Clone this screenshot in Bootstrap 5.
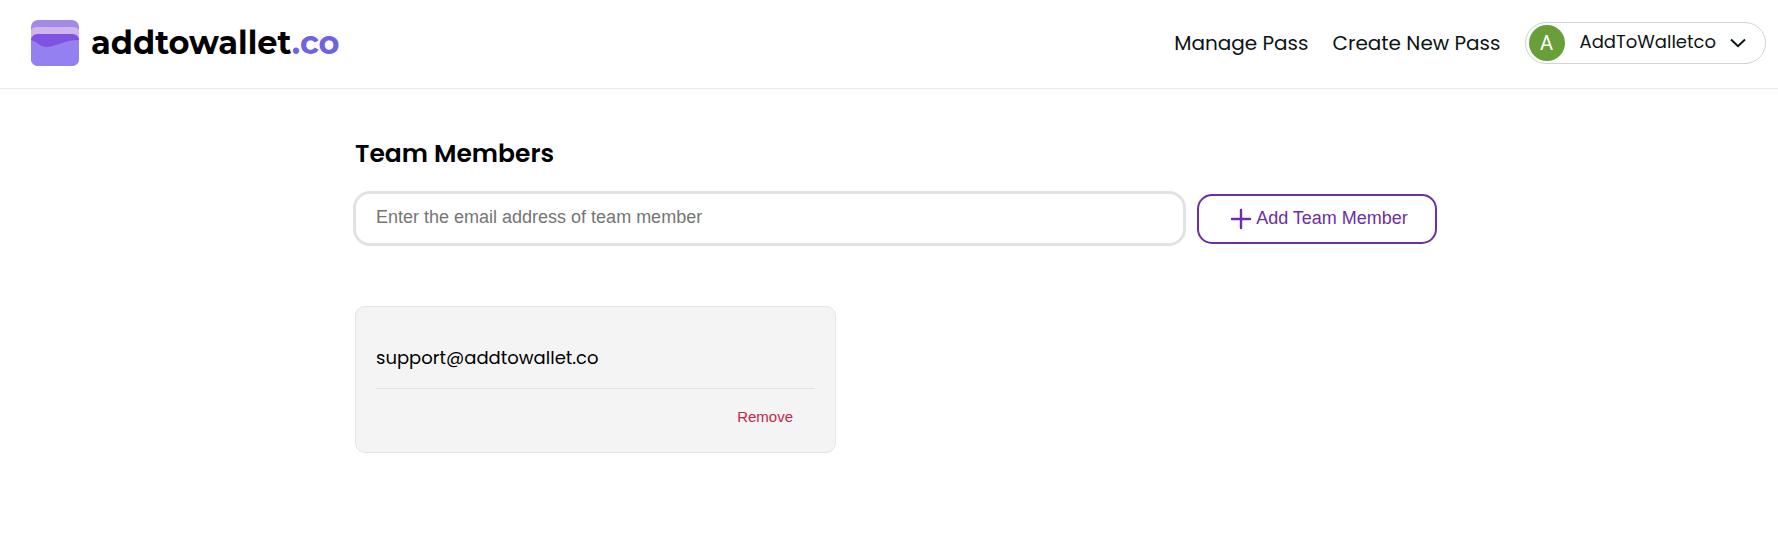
<!DOCTYPE html>
<html lang="en">
<head>
<meta charset="utf-8">
<meta name="viewport" content="width=device-width, initial-scale=1">
<title>Team Members</title>
<link href="https://cdn.jsdelivr.net/npm/bootstrap@5.3.0/dist/css/bootstrap.min.css" rel="stylesheet">
<style>
body { font-family: Poppins, Inter, sans-serif; color: #000; background: #fff; }
.topbar { min-height: 89px; padding: 0 12px 2px 30px; border-bottom: 1px solid #e9eaec; }
.brand-name { font-family: Montserrat, Inter, sans-serif; font-size: 32px; font-weight: 700; line-height: 46px; padding-left: 3px; color: #000; }
.brand-name span { color: #6f63e0; }
.top-link { font-size: 20px; line-height: 30px; color: #0c1414; text-decoration: none; }
.account { height: 42px; padding: 0 19px 0 3px; border: 1px solid #cdd4de; border-radius: 21px; background: #fff; font-size: 18px; color: #0c1414; }
.account-name { padding-bottom: 3px; margin: 0 14px 0 15px; }
.avatar { width: 36px; height: 36px; border-radius: 50%; background: #689f38; color: #fff; font-family: Roboto, sans-serif; font-size: 20px; }
.team { max-width: 1096px; padding: 48px 0 0 12px; }
.team-title { font-size: 25px; line-height: 34px; font-weight: 600; margin: 0 0 20px 2px; }
.team-form { gap: 11px; }
.email-box { height: 55px; padding: 0 20px 2px; border: 3px solid #e0e3e6; border-radius: 17px; font-family: "Liberation Sans", Arial, sans-serif; font-size: 18px; }
.email-box::placeholder { color: #757575; }
.add-btn { width: 240px; height: 50px; border: 2px solid #6b2fa0; border-radius: 15px; background: #fff; color: #6b2fa0; font-family: "Liberation Sans", Arial, sans-serif; font-size: 18px; padding: 0 0 0 4px; }
.member { max-width: 481px; margin: 60px 0 0 2px; padding: 37px 20px 21px; background: #f4f4f4; border: 1px solid #e3e4e6; border-radius: 10px; }
.member-mail { font-size: 18px; line-height: 28px; padding-bottom: 16px; border-bottom: 1px solid #dfe0e2; }
.remove-btn { border: 0; background: none; color: #c2274f; font-family: "Liberation Sans", Arial, sans-serif; font-size: 15px; line-height: 18px; padding: 19px 22px 5px; }
</style>
</head>
<body>
<header class="topbar d-flex flex-wrap align-items-center justify-content-between">
  <a href="#" class="d-flex align-items-center text-decoration-none gap-2">
    <svg width="50" height="48" viewBox="0 0 50 48" aria-hidden="true">
      <defs><clipPath id="wallet"><rect x="1" y="1" width="48" height="46" rx="7"/></clipPath></defs>
      <g clip-path="url(#wallet)">
        <rect width="50" height="48" fill="#a08be6"/>
        <path d="M0 14Q1 8 7 8H43Q49 8 50 14V25H0Z" fill="#cfb5ec"/>
        <path d="M0 22Q2 15 8 15H42Q48 15 50 22V30H0Z" fill="#7f53e0"/>
        <path d="M0 21Q3 21 7 24Q12 28 17 28Q21 28 29 25Q40 21 50 21V48H0Z" fill="#9580f2"/>
      </g>
    </svg>
    <span class="brand-name">addtowallet<span>.co</span></span>
  </a>
  <nav class="d-flex flex-wrap align-items-center gap-4">
    <a class="top-link" href="#">Manage Pass</a>
    <a class="top-link" href="#">Create New Pass</a>
    <button type="button" class="account d-flex align-items-center">
      <span class="avatar d-flex align-items-center justify-content-center">A</span>
      <span class="account-name">AddToWalletco</span>
      <svg width="16" height="10" viewBox="0 0 16 10" fill="none" stroke="#0c1414" stroke-width="2" aria-hidden="true"><path d="M1 1.500L8 8.200L15 1.500"/></svg>
    </button>
  </nav>
</header>
<main class="team mx-auto">
  <h1 class="team-title">Team Members</h1>
  <form class="team-form d-flex align-items-center">
    <input type="email" class="email-box flex-grow-1" aria-label="Email address" placeholder="Enter the email address of team member">
    <button type="button" class="add-btn d-flex align-items-center justify-content-center gap-1 flex-shrink-0">
      <svg width="22" height="22" viewBox="0 0 22 22" stroke="#6f2da8" stroke-width="2.400" stroke-linecap="round" aria-hidden="true"><path d="M2 11H20M11 2V20"/></svg>
      Add Team Member
    </button>
  </form>
  <section class="member">
    <div class="member-mail">support@addtowallet.co</div>
    <div class="text-end"><button type="button" class="remove-btn">Remove</button></div>
  </section>
</main>
<script src="https://cdn.jsdelivr.net/npm/bootstrap@5.3.0/dist/js/bootstrap.bundle.min.js"></script>
</body>
</html>
